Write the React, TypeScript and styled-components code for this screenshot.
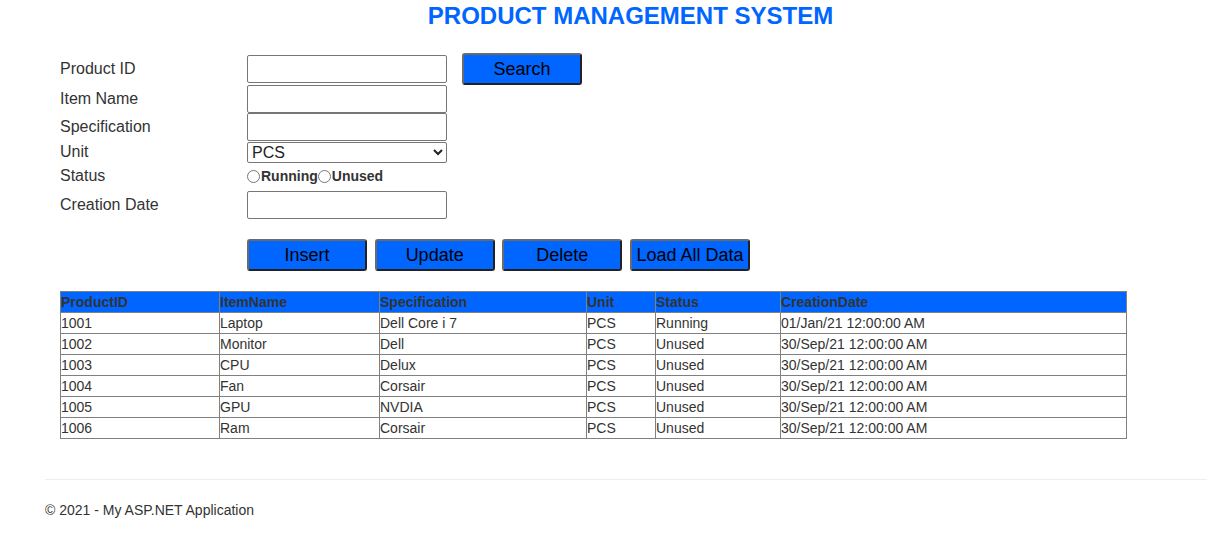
import React from "react";
import styled, { createGlobalStyle } from "styled-components";

const GlobalStyle = createGlobalStyle`
  html, body { margin: 0; padding: 0; overflow-x: hidden; background: #fff; }
  body {
    font-family: "Liberation Sans", Arial, Helvetica, sans-serif;
    font-size: 14px;
    line-height: 1.42857;
    color: #333;
  }
  * { box-sizing: border-box; }
`;

const Container = styled.div`
  width: 1171px;
  margin-left: 45px;
`;

const Title = styled.h1`
  margin: 0;
  padding-top: 2px;
  font-size: 24px;
  line-height: 28px;
  font-weight: bold;
  color: #0066ff;
  text-align: center;
`;

const FormGrid = styled.div`
  margin: 23px 0 0 15px;
  display: grid;
  grid-template-columns: 172px 200px auto;
  grid-template-rows: 32px 28px 28px 22px 26px 32px auto;
  column-gap: 15px;
  align-items: center;
`;

const Label = styled.div`
  font-size: 16px;
  line-height: 18px;
  color: #333;
`;

const TextInput = styled.input`
  width: 200px;
  height: 28px;
  border: 1px solid #767676;
  border-radius: 2px;
  background: #fff;
  font: 16px "Liberation Sans", Arial, sans-serif;
  padding: 0 3px;
  margin: 0;
`;

const Select = styled.select`
  width: 200px;
  height: 21px;
  border: 1px solid #767676;
  border-radius: 2px;
  background: #fff;
  color: #222;
  font: 16px "Liberation Sans", Arial, sans-serif;
  padding: 0;
  margin: 0;
`;

const RadioGroup = styled.div`
  display: flex;
  align-items: center;
  grid-column: 2 / -1;
`;

const Radio = styled.input`
  width: 13px;
  height: 13px;
  margin: 0;
`;

const RadioText = styled.label`
  font-size: 14px;
  font-weight: bold;
  color: #333;
  line-height: 16px;
  margin-left: 1px;
`;

const Button = styled.button`
  width: 120px;
  height: 32px;
  padding: 0;
  background: #0066ff;
  color: #000;
  font: 18px "Liberation Sans", Arial, sans-serif;
  border: 2px solid;
  border-color: #6a6a6a #222 #222 #6a6a6a;
  border-radius: 3px;
  cursor: pointer;
`;

const SearchCell = styled.div`
  justify-self: start;
`;

const ButtonRow = styled.div`
  grid-column: 2 / -1;
  display: flex;
  gap: 7.67px;
  margin-top: 18px;
`;

const DataTable = styled.table`
  margin: 20px 0 0 15px;
  width: 1067px;
  table-layout: fixed;
  border-collapse: collapse;
  border: 1px solid #808080;
  font-size: 14px;
  line-height: 20px;
`;

const Th = styled.th`
  background: #0066ff;
  color: #333;
  font-weight: bold;
  text-align: left;
  padding: 0;
  border: 1px solid #808080;
  white-space: nowrap;
  overflow: hidden;
`;

const Td = styled.td`
  padding: 0;
  border: 1px solid #808080;
  color: #333;
  white-space: nowrap;
  overflow: hidden;
`;

const Rule = styled.hr`
  margin: 40px 0 20px 0;
  border: 0;
  border-top: 1px solid #eee;
`;

const Footer = styled.footer`
  margin: 0 0 10px 0;
  font-size: 14px;
  line-height: 20px;
  color: #333;
`;

const columns = [
  { key: "ProductID", w: 159 },
  { key: "ItemName", w: 160 },
  { key: "Specification", w: 207 },
  { key: "Unit", w: 69 },
  { key: "Status", w: 125 },
  { key: "CreationDate", w: 346 },
];

const rows = [
  ["1001", "Laptop", "Dell Core i 7", "PCS", "Running", "01/Jan/21 12:00:00 AM"],
  ["1002", "Monitor", "Dell", "PCS", "Unused", "30/Sep/21 12:00:00 AM"],
  ["1003", "CPU", "Delux", "PCS", "Unused", "30/Sep/21 12:00:00 AM"],
  ["1004", "Fan", "Corsair", "PCS", "Unused", "30/Sep/21 12:00:00 AM"],
  ["1005", "GPU", "NVDIA", "PCS", "Unused", "30/Sep/21 12:00:00 AM"],
  ["1006", "Ram", "Corsair", "PCS", "Unused", "30/Sep/21 12:00:00 AM"],
];

export default function App() {
  return (
    <>
      <GlobalStyle />
      <Container>
        <Title>PRODUCT MANAGEMENT SYSTEM</Title>
        <FormGrid>
          <Label>Product ID</Label>
          <TextInput type="text" />
          <SearchCell>
            <Button type="button">Search</Button>
          </SearchCell>

          <Label>Item Name</Label>
          <TextInput type="text" />
          <div />

          <Label>Specification</Label>
          <TextInput type="text" />
          <div />

          <Label>Unit</Label>
          <Select defaultValue="PCS">
            <option value="PCS">PCS</option>
            <option value="KG">KG</option>
          </Select>
          <div />

          <Label>Status</Label>
          <RadioGroup>
            <Radio type="radio" name="status" id="running" />
            <RadioText htmlFor="running">Running</RadioText>
            <Radio type="radio" name="status" id="unused" />
            <RadioText htmlFor="unused">Unused</RadioText>
          </RadioGroup>

          <Label>Creation Date</Label>
          <TextInput type="text" />
          <div />

          <div />
          <ButtonRow>
            <Button type="button">Insert</Button>
            <Button type="button">Update</Button>
            <Button type="button">Delete</Button>
            <Button type="button">Load All Data</Button>
          </ButtonRow>
        </FormGrid>

        <DataTable>
          <colgroup>
            {columns.map((c) => (
              <col key={c.key} style={{ width: c.w }} />
            ))}
          </colgroup>
          <thead>
            <tr>
              {columns.map((c) => (
                <Th key={c.key}>{c.key}</Th>
              ))}
            </tr>
          </thead>
          <tbody>
            {rows.map((r) => (
              <tr key={r[0]}>
                {r.map((v, i) => (
                  <Td key={i}>{v}</Td>
                ))}
              </tr>
            ))}
          </tbody>
        </DataTable>

        <Rule />
        <Footer>© 2021 - My ASP.NET Application</Footer>
      </Container>
    </>
  );
}
